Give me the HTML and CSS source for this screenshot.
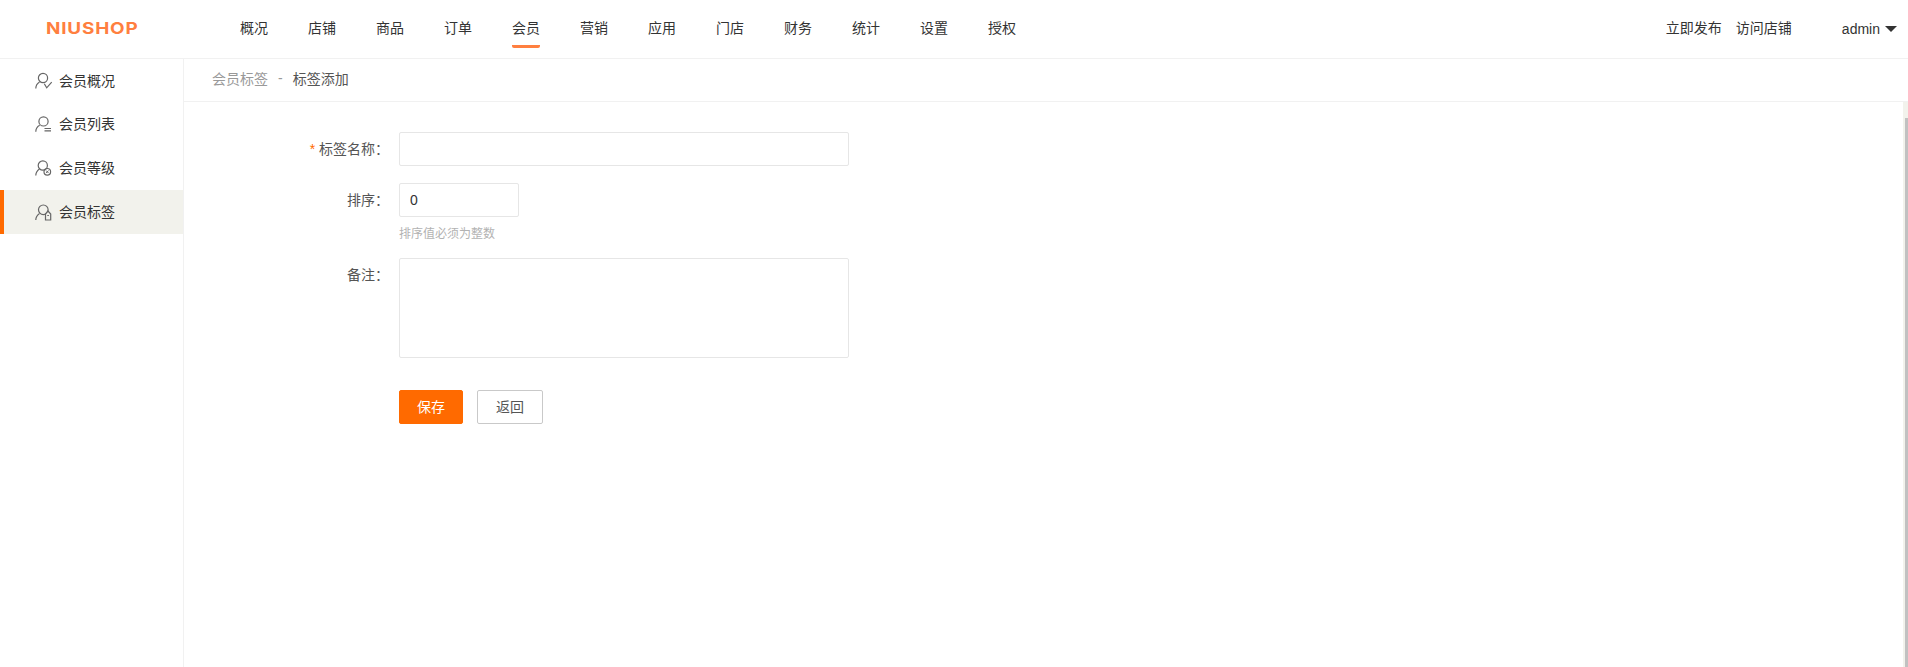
FILE: index.html
```html
<!DOCTYPE html>
<html lang="zh-CN">
<head>
<meta charset="utf-8">
<title>标签添加</title>
<link rel="stylesheet" href="styles.css">
</head>
<body>
<header class="topbar">
  <div class="logo-box"><span class="logo">NIUSHOP</span></div>
  <nav class="main-nav">
    <a class="nav-item">概况</a>
    <a class="nav-item">店铺</a>
    <a class="nav-item">商品</a>
    <a class="nav-item">订单</a>
    <a class="nav-item active">会员</a>
    <a class="nav-item">营销</a>
    <a class="nav-item">应用</a>
    <a class="nav-item">门店</a>
    <a class="nav-item">财务</a>
    <a class="nav-item">统计</a>
    <a class="nav-item">设置</a>
    <a class="nav-item">授权</a>
  </nav>
  <div class="top-right">
    <a class="top-link">立即发布</a>
    <a class="top-link">访问店铺</a>
    <a class="user">admin<i class="caret"></i></a>
  </div>
</header>
<div class="body-row">
  <aside class="sidebar">
    <a class="side-item">
      <svg class="side-icon" viewBox="0 0 18 18" fill="none" stroke="#666" stroke-width="1.2"><circle cx="8" cy="6" r="4.600"/><path d="M.8 16.500c0-2.800 1.400-5 3.700-6.500"/><path d="M9.300 11.800l2.400 4 5-5.600"/></svg>
      <span class="side-text">会员概况</span>
    </a>
    <a class="side-item">
      <svg class="side-icon" viewBox="0 0 18 18" fill="none" stroke="#666" stroke-width="1.2"><circle cx="8.500" cy="6.400" r="4.600"/><path d="M.8 16.700c0-2.800 1.400-5 3.900-6.400"/><path d="M9.500 13.500H16M9.500 15.800H16"/></svg>
      <span class="side-text">会员列表</span>
    </a>
    <a class="side-item">
      <svg class="side-icon" viewBox="0 0 18 18" fill="none" stroke="#666" stroke-width="1.2"><circle cx="7.800" cy="6.500" r="4.600"/><path d="M.8 16.500c0-2.800 1.400-5 3.600-6.600"/><circle cx="12.300" cy="12.800" r="3.300"/><path d="M11 11.500l2.600 2.600M13.600 11.500L11 14.100" stroke-width="1"/></svg>
      <span class="side-text">会员等级</span>
    </a>
    <a class="side-item active">
      <svg class="side-icon" viewBox="0 0 18 18" fill="none" stroke="#666" stroke-width="1.2"><circle cx="8.300" cy="6.800" r="4.800"/><path d="M.8 17c0-2.800 1.400-5 3.700-6.600"/><path d="M10.500 17v-6l2.500-3 2.700 3v6z" fill="#f2f2ec"/><path d="M12.300 12.500h1.600" stroke-width="1"/></svg>
      <span class="side-text">会员标签</span>
    </a>
  </aside>
  <main class="content">
    <div class="crumbs">
      <span class="crumb-parent">会员标签</span>
      <span class="crumb-sep">-</span>
      <span class="crumb-current">标签添加</span>
    </div>
    <div class="scroll-area">
      <form class="form">
        <div class="form-row">
          <label class="form-label"><span class="required">*</span> 标签名称：</label>
          <input class="input input-long" type="text">
        </div>
        <div class="form-row row-sort">
          <label class="form-label">排序：</label>
          <input class="input input-short" type="text" value="0">
        </div>
        <p class="hint">排序值必须为整数</p>
        <div class="form-row row-note">
          <label class="form-label">备注：</label>
          <textarea class="textarea"></textarea>
        </div>
        <div class="actions">
          <button class="btn btn-primary" type="button">保存</button>
          <button class="btn btn-default" type="button">返回</button>
        </div>
      </form>
    </div>
  </main>
</div>
</body>
</html>
```
FILE: styles.css
```css
* { box-sizing: border-box; }
html, body { margin: 0; height: 100%; overflow: hidden; }
body {
  background: #fff;
  color: #333;
  font-family: "Liberation Sans", "Noto Sans CJK SC", sans-serif;
  font-size: 14px;
  display: flex;
  flex-direction: column;
}
.topbar {
  height: 59px;
  flex: none;
  display: flex;
  border-bottom: 1px solid #f1f1f1;
}
.logo-box { width: 183px; flex: none; padding: 17px 0 0 46px; }
.logo {
  display: block;
  width: 93px;
  color: #ff7f3f;
  font-family: "Inter", sans-serif;
  font-size: 16px;
  font-weight: 700;
  line-height: 22px;
  letter-spacing: 0.7px;
  white-space: nowrap;
  transform: scaleX(1.18);
  transform-origin: left center;
}
.main-nav { display: flex; padding-left: 57px; gap: 40px; }
.nav-item {
  width: 28px;
  height: 48px;
  line-height: 57px;
  white-space: nowrap;
  color: #333;
}
.nav-item.active { border-bottom: 3px solid #ff7f3f; border-radius: 2px; }
.top-right { margin-left: auto; display: flex; padding-right: 11px; line-height: 57px; }
.top-link { margin-right: 14px; }
.top-link + .top-link { margin-right: 50px; }
.user { display: flex; align-items: center; gap: 5px; }
.caret { width: 0; height: 0; border: 6px solid transparent; border-top: 6px solid #333; border-bottom: 0; }
.body-row { flex: 1; display: flex; min-height: 0; }
.sidebar { width: 184px; flex: none; border-right: 1px solid #f1f1f1; }
.side-item {
  height: 44px;
  display: flex;
  align-items: center;
  gap: 6px;
  padding-left: 35px;
  color: #333;
}
.side-item:first-child { height: 43px; }
.side-text { margin-bottom: 2px; }
.side-item.active {
  background: #f2f2ec;
  border-left: 4px solid #ff6a00;
  padding-left: 31px;
}
.side-icon { width: 18px; height: 18px; flex: none; }
.content { flex: 1; min-width: 0; display: flex; flex-direction: column; }
.crumbs {
  height: 43px;
  flex: none;
  border-bottom: 1px solid #f1f1f1;
  display: flex;
  align-items: center;
  padding-left: 28px;
  padding-bottom: 4px;
}
.crumb-parent { color: #999; }
.crumb-sep { color: #999; margin: 0 10px; }
.crumb-current { color: #555; }
.scroll-area { flex: 1; min-height: 0; border-right: 5px solid #f2f2ec; position: relative; }
.scroll-area::after {
  content: "";
  position: absolute;
  right: -5px;
  top: 16px;
  width: 3px;
  bottom: 0;
  background: #c1c1c1;
}
.form { padding-top: 30px; }
.form-row { display: flex; }
.form-label {
  width: 205px;
  margin-right: 11px;
  padding-top: 9px;
  text-align: right;
  line-height: 17px;
  color: #555;
  flex: none;
  white-space: nowrap;
}
.required { color: #ff6a00; }
.input, .textarea {
  display: block;
  border: 1px solid #e6e6e6;
  border-radius: 2px;
  background: #fff;
  font: inherit;
  color: #333;
  margin: 0 0 0 -1px;
  outline: 0;
}
.input { height: 34px; padding: 0 10px; }
.input-long { width: 450px; }
.input-short { width: 120px; }
.row-sort { margin-top: 17px; }
.hint {
  margin: 9px 0 0 215px;
  font-size: 12px;
  line-height: 17px;
  color: #b2b2b2;
}
.row-note { margin-top: 15px; }
.textarea { width: 450px; height: 100px; resize: none; padding: 6px 10px; }
.actions { display: flex; gap: 14px; margin: 32px 0 0 215px; }
.btn { height: 34px; border-radius: 2px; font: inherit; padding: 0 0 2px; }
.btn-primary { width: 64px; background: #ff6a00; border: 1px solid #ff6a00; color: #fff; }
.btn-default { width: 66px; background: #fff; border: 1px solid #c9c9c9; color: #555; }
```
